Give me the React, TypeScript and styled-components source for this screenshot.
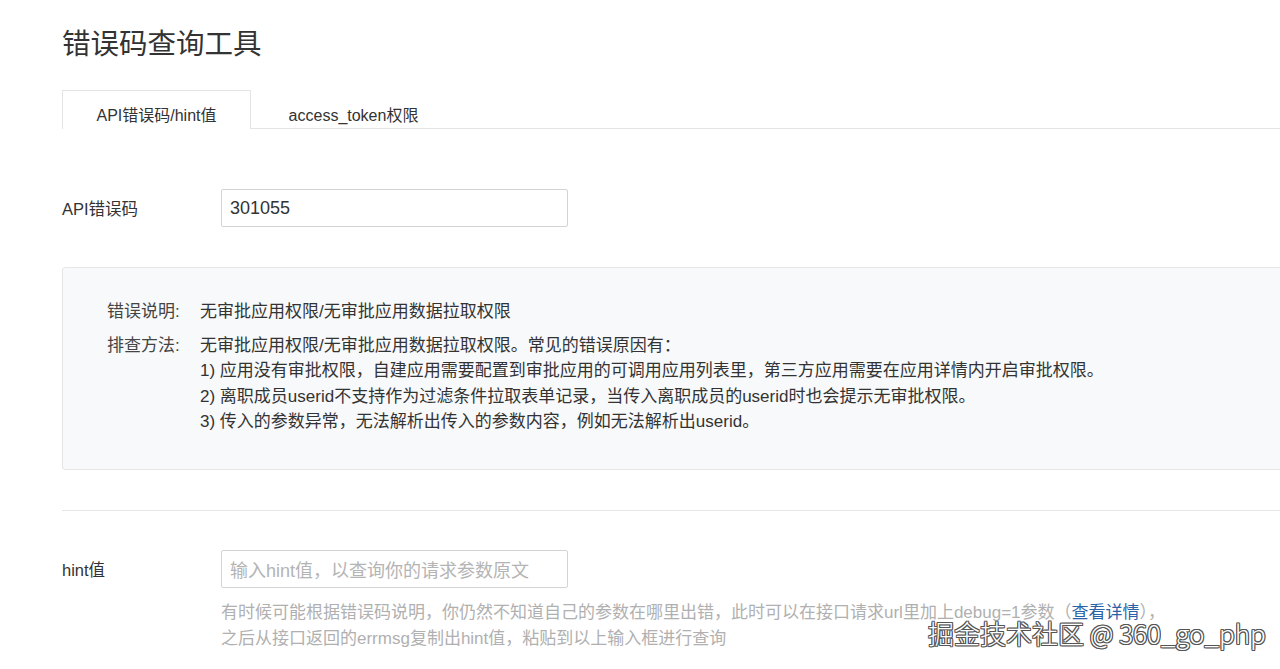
import React from "react";
import styled, { createGlobalStyle } from "styled-components";

const FONT = `"Liberation Sans", "Noto Sans CJK SC", sans-serif`;

const Global = createGlobalStyle`
  html, body {
    margin: 0;
    padding: 0;
    background: #ffffff;
    overflow: hidden;
  }
  body {
    font-family: ${FONT};
    color: #333;
  }
  * { box-sizing: border-box; }
`;

const Page = styled.div`
  position: relative;
  width: 1280px;
  height: 669px;
  overflow: hidden;
  padding: 24px 0 0 62px;
`;

const Inner = styled.div`
  width: 1260px;
`;

const Title = styled.h1`
  margin: 0;
  font-size: 28.5px;
  line-height: 40px;
  font-weight: 400;
  color: #333;
`;

const TabBar = styled.div`
  margin-top: 26px;
  display: flex;
  border-bottom: 1px solid #e4e4e4;
  height: 39px;
`;

const Tab = styled.div<{ $active?: boolean; $width: number }>`
  width: ${(p) => p.$width}px;
  padding-top: 14px;
  text-align: center;
  font-size: 16px;
  line-height: 22px;
  color: #333;
  background: #fff;
  border: 1px solid ${(p) => (p.$active ? "#e4e4e4" : "transparent")};
  border-bottom: none;
  margin-bottom: ${(p) => (p.$active ? "-1px" : "0")};
  height: ${(p) => (p.$active ? "39px" : "38px")};
`;

const FormRow = styled.div<{ $top: number }>`
  margin-top: ${(p) => p.$top}px;
  display: flex;
  align-items: center;
`;

const FieldLabel = styled.div`
  width: 159px;
  font-size: 16.5px;
  color: #333;
`;

const Field = styled.div<{ $placeholder?: boolean }>`
  width: 347px;
  height: 38px;
  border: 1px solid #d4d4d4;
  border-radius: 2px;
  padding: 0 8px;
  display: flex;
  align-items: center;
  font-size: 18px;
  color: ${(p) => (p.$placeholder ? "#b4b4b4" : "#333")};
`;

const InfoBox = styled.div`
  margin-top: 40px;
  height: 203px;
  background: #f8f9fa;
  border: 1px solid #e4e6e8;
  border-radius: 3px;
  padding: 31px 0 0 44px;
  display: flex;
  flex-direction: column;
  gap: 8px;
`;

const InfoRow = styled.div`
  display: flex;
  font-size: 17px;
  line-height: 25.5px;
  color: #333;
`;

const InfoLabel = styled.div`
  width: 93px;
  flex-shrink: 0;
  color: #444;
`;

const InfoValue = styled.div`
  white-space: nowrap;
`;

const Divider = styled.div`
  margin-top: 40px;
  height: 1px;
  background: #e6e6e6;
`;

const Help = styled.div`
  margin: 12px 0 0 159px;
  font-size: 17px;
  line-height: 26px;
  color: #b0b0b0;
  white-space: nowrap;
`;

const Link = styled.span`
  color: #2a62a8;
`;

const Watermark = styled.div`
  position: absolute;
  left: 928px;
  top: 616px;
  font-family: "Noto Sans CJK SC", sans-serif;
  font-weight: 300;
  font-size: 26px;
  line-height: 34px;
  color: #ffffff;
  text-shadow: 1px 1px 0 #555, -1px -1px 0 #555, 1px -1px 0 #555, -1px 1px 0 #555,
    0 1px 0 #555, 1px 0 0 #555, 0 -1px 0 #555, -1px 0 0 #555;
`;

export default function App() {
  return (
    <>
      <Global />
      <Page>
        <Inner>
          <Title>错误码查询工具</Title>
          <TabBar>
            <Tab $active $width={189}>API错误码/hint值</Tab>
            <Tab $width={205}>access_token权限</Tab>
          </TabBar>
          <FormRow $top={60}>
            <FieldLabel>API错误码</FieldLabel>
            <Field>301055</Field>
          </FormRow>
          <InfoBox>
            <InfoRow>
              <InfoLabel>错误说明:</InfoLabel>
              <InfoValue>无审批应用权限/无审批应用数据拉取权限</InfoValue>
            </InfoRow>
            <InfoRow>
              <InfoLabel>排查方法:</InfoLabel>
              <InfoValue>
                无审批应用权限/无审批应用数据拉取权限。常见的错误原因有：
                <br />
                1) 应用没有审批权限，自建应用需要配置到审批应用的可调用应用列表里，第三方应用需要在应用详情内开启审批权限。
                <br />
                2) 离职成员userid不支持作为过滤条件拉取表单记录，当传入离职成员的userid时也会提示无审批权限。
                <br />
                3) 传入的参数异常，无法解析出传入的参数内容，例如无法解析出userid。
              </InfoValue>
            </InfoRow>
          </InfoBox>
          <Divider />
          <FormRow $top={39}>
            <FieldLabel>hint值</FieldLabel>
            <Field $placeholder>输入hint值，以查询你的请求参数原文</Field>
          </FormRow>
          <Help>
            有时候可能根据错误码说明，你仍然不知道自己的参数在哪里出错，此时可以在接口请求url里加上debug=1参数（<Link>查看详情</Link>），
            <br />
            之后从接口返回的errmsg复制出hint值，粘贴到以上输入框进行查询
          </Help>
        </Inner>
        <Watermark>掘金技术社区 @ 360_go_php</Watermark>
      </Page>
    </>
  );
}
